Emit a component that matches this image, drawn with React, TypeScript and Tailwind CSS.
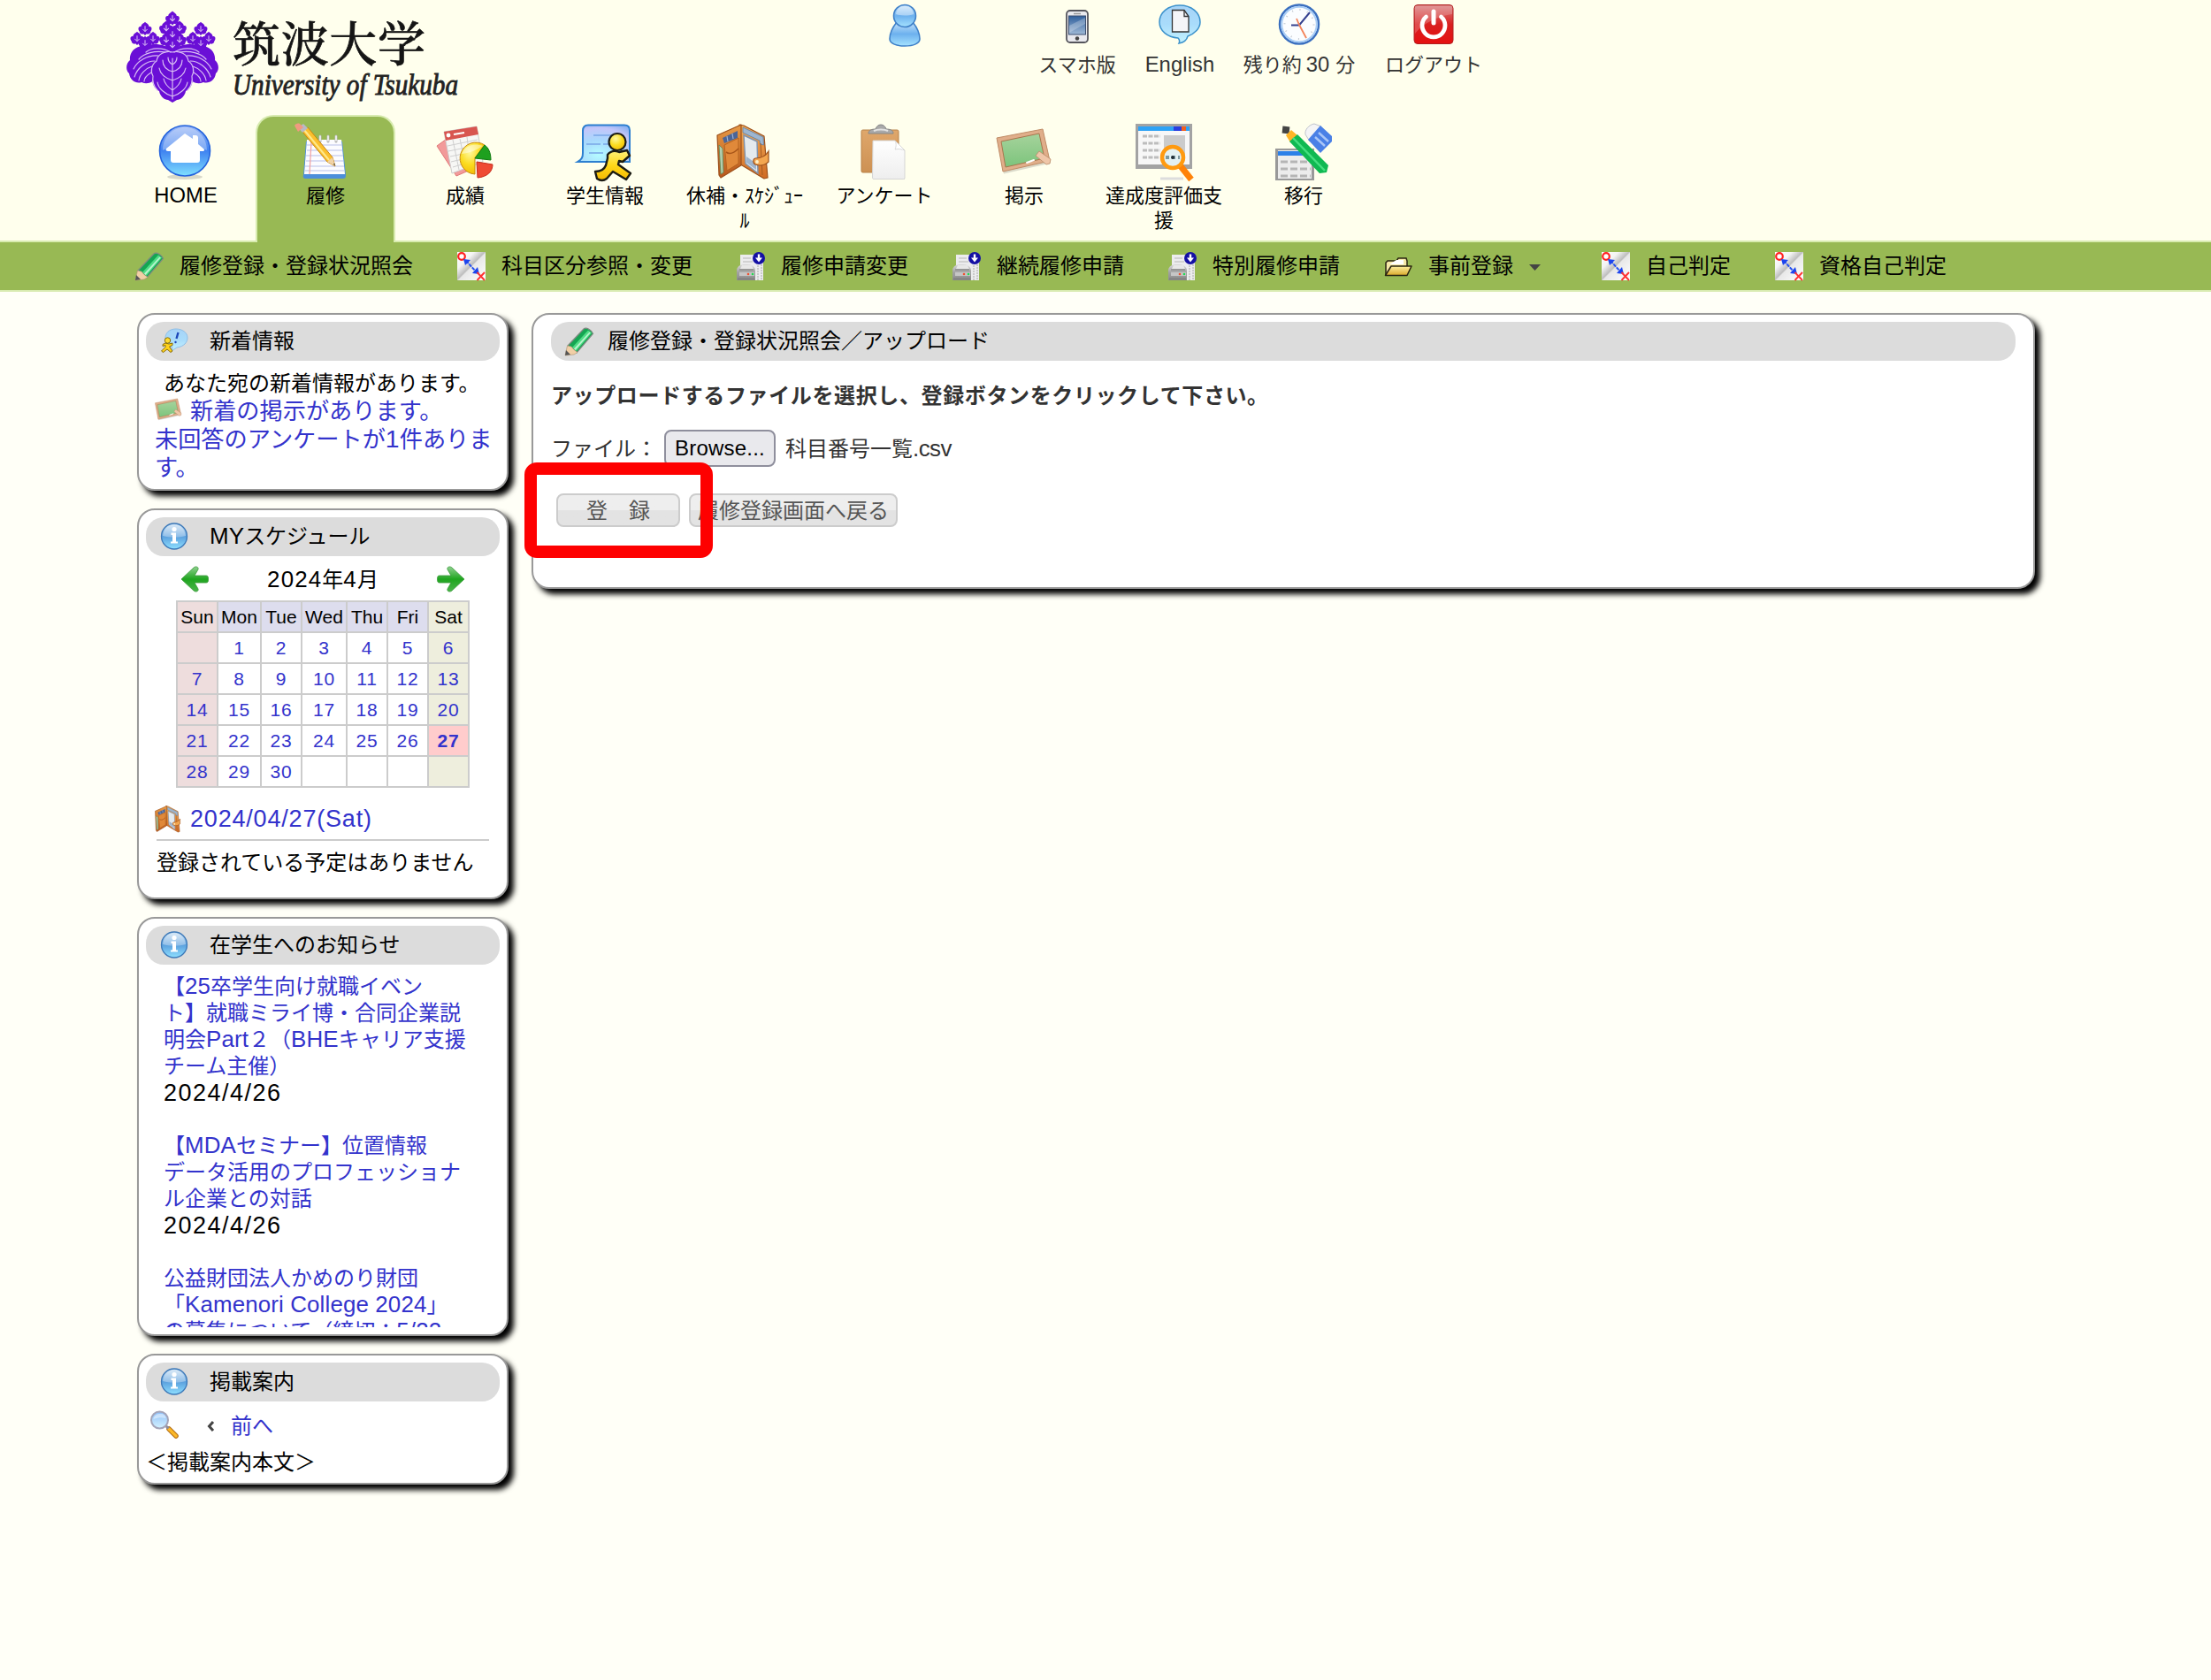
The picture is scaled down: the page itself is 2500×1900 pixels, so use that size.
import React from "react";

const LATIN = /([!-~][ -~]*)/;

/* Mixed Japanese / Latin text: Latin runs are set a little larger to balance the kana. */
function T({ children, ls = "tracking-[0.005em]" }: { children: string; ls?: string }) {
  return (
    <>
      {children.split(LATIN).map((part, i) =>
        i % 2 ? (
          <span key={i} className={`font-['Liberation_Sans',Arial,sans-serif] text-[1.08em] leading-none ${ls}`}>
            {part}
          </span>
        ) : (
          part
        )
      )}
    </>
  );
}

function Defs() {
  const lin = (id: string, a: string, b: string, c?: string) => (
    <linearGradient id={id} x1="0" y1="0" x2="0" y2="1">
      <stop offset="0" stopColor={a} />
      {c ? <stop offset="0.5" stopColor={b} /> : null}
      <stop offset="1" stopColor={c || b} />
    </linearGradient>
  );
  return (
    <svg className="absolute h-0 w-0" aria-hidden>
      <defs>
        {lin("gHome", "#9db9f6", "#3f82f0", "#7fe0ff")}
        {lin("gInfo", "#cfe3f5", "#5a9fdd", "#8fe0ff")}
        {lin("gPerson", "#c4e2fb", "#6db1ee", "#a5e2ff")}
        {lin("gBubble", "#a6d3f7", "#a9dcfb", "#c5f3ff")}
        {lin("gScreen", "#2f5f9c", "#9fb9d6")}
        {lin("gPower", "#d98080", "#d92020", "#e51010")}
        {lin("gYellow", "#fff27a", "#ffd81a", "#f4b800")}
        {lin("gOrange", "#f2ae58", "#cf6a24")}
        {lin("gOrangeDark", "#e79a45", "#b9561c")}
        {lin("gBoard", "#a6d39c", "#7cc47c")}
        {lin("gPaper", "#ffffff", "#eeeeee")}
        {lin("gArrow", "#8fd08f", "#1fa51f", "#4cb44c")}
        {lin("gClip", "#dfa76b", "#cd9153")}
        {lin("gLens", "#8fbff8", "#d4f2ff")}
        {lin("gFolder", "#fff0a0", "#d9a92a")}
        {lin("gPrinter", "#d9d9d9", "#a2a2a2", "#8c8c8c")}
        <radialGradient id="gChat" cx="0.4" cy="0.8" r="0.9">
          <stop offset="0" stopColor="#b4fcff" />
          <stop offset="0.45" stopColor="#a8d8fd" />
          <stop offset="0.8" stopColor="#c3c6fa" />
          <stop offset="1" stopColor="#8fb4f2" />
        </radialGradient>
        <linearGradient id="gCompare" x1="0" y1="0" x2="1" y2="1">
          <stop offset="0" stopColor="#ffffff" />
          <stop offset="0.3" stopColor="#f4f4f4" />
          <stop offset="0.49" stopColor="#bdbdbd" />
          <stop offset="0.52" stopColor="#e8e8e8" />
          <stop offset="1" stopColor="#ffffff" />
        </linearGradient>
        <radialGradient id="gBall" cx="0.4" cy="0.3" r="0.8">
          <stop offset="0" stopColor="#fff9a0" />
          <stop offset="0.5" stopColor="#fbdc20" />
          <stop offset="1" stopColor="#f0b400" />
        </radialGradient>
      </defs>
    </svg>
  );
}

const Svg = ({ s, v = 64, children }: { s: number; v?: number; children: React.ReactNode }) => (
  <svg width={s} height={s} viewBox={`0 0 ${v} ${v}`} fill="none" className="shrink-0 overflow-visible">
    {children}
  </svg>
);

function Emblem() {
  const bloom = (x: number, y: number, k = 1) => (
    <g key={`${x}-${y}`} transform={`translate(${x} ${y}) scale(${k})`}>
      <path
        d="M0-8C2-6 5-5 5-2 9-3 9 2 7 4 7 7 4 8 2 7L0 9-2 7C-4 8-7 7-7 4-9 2-9-3-5-2-5-5-2-6 0-8Z"
        fill="#6a0fd6"
      />
      <path d="M0-3V4M-3 1 0 4 3 1" stroke="#e0c8f6" strokeWidth="1.1" />
    </g>
  );
  return (
    <svg width="104" height="104" viewBox="0 0 104 104" fill="none" className="shrink-0">
      <g fill="#6a0fd6">
        {[[52, 8], [45, 19], [60, 19], [45, 32], [60, 32], [52, 26], [52, 38]].map(([x, y]) => bloom(x, y, 0.95))}
        {[[21, 20], [12, 31], [30, 31], [21, 36]].map(([x, y]) => bloom(x, y, 0.9))}
        {[[84, 20], [93, 31], [75, 31], [84, 36]].map(([x, y]) => bloom(x, y, 0.9))}
        <path d="M52 45C46 38 30 36 20 40 8 40 3 49 4 56-1 60-1 68 3 71 4 79 11 83 17 81 24 84 30 81 33 76Z" />
        <path d="M52 45C58 38 74 36 84 40 96 40 101 49 100 56 105 60 105 68 101 71 100 79 93 83 87 81 80 84 74 81 71 76Z" />
        <path d="M52 46C44 44 35 49 34 57 28 61 27 69 30 74 28 81 31 88 37 91 38 97 43 101 47 101L52 104 57 101C61 101 66 97 67 91 73 88 76 81 74 74 77 69 76 61 70 57 69 49 60 44 52 46Z" />
      </g>
      <g stroke="#d9bdf3" strokeWidth="1.2" strokeLinecap="round">
        <path d="M52 47C44 45 35 49 34 57 28 61 27 69 30 74 29 80 31 86 35 90M52 47C60 45 69 49 70 57 76 61 77 69 74 74 75 80 73 86 69 90" />
        <path d="M52 54V100M52 90C46 86 43 82 42 77M52 90C58 86 61 82 62 77M52 79C43 76 38 71 37 65M52 79C61 76 66 71 67 65M52 69C45 67 41 62 41 56M52 69C59 67 63 62 63 56M52 97C43 94 36 88 35 81M52 97C61 94 68 88 69 81M52 61C48 59 47 56 47 53M52 61C56 59 57 56 57 53" />
        <path d="M50 47C40 41 28 42 22 47M44 47C32 45 20 48 14 55M36 51C24 50 12 57 8 66M32 57C22 57 12 65 9 75M29 63C22 65 15 72 14 79M28 70C23 73 20 77 20 80" />
        <path d="M54 47C64 41 76 42 82 47M60 47C72 45 84 48 90 55M68 51C80 50 92 57 96 66M72 57C82 57 92 65 95 75M75 63C82 65 89 72 90 79M76 70C81 73 84 77 84 80" />
      </g>
    </svg>
  );
}

const HomeIcon = () => (
  <Svg s={64}>
    <ellipse cx="31" cy="60" rx="20" ry="3" fill="#000" opacity=".15" />
    <circle cx="31" cy="30.500" r="28.500" fill="url(#gHome)" stroke="#2463dd" strokeWidth="1.600" />
    <path d="M6 30C6 14 18 4 31 4s25 10 25 26C43 24 19 24 6 30Z" fill="#fff" opacity=".3" />
    <path
      d="M31 11 10 28c-1 2 0 3 2 3h3v10c0 2 1 3 3 3h27c2 0 3-1 3-3V31h3c2 0 3-1 1-3l-6-5v-7c0-2-1-3-3-3h-3v4Z"
      fill="#fff"
    />
  </Svg>
);

const NotepadIcon = () => (
  <Svg s={64}>
    <g transform="translate(-1 0)">
      <path d="M11 20h41l4 38c0 3-1 4-3 4H11c-3 0-4-2-3-4Z" fill="#4c8edb" />
      <path d="M12 18h39l4 39H9Z" fill="#fcfcff" />
      <path d="M12 24h40M12 30h40M11 36h42M11 42h42M10 48h44M10 53h44" stroke="#b7bfe8" strokeWidth="1" />
      <path d="M17 20 15 57" stroke="#f2a0a0" strokeWidth="1.200" />
      <path d="M18 20v-6M27 20v-6M36 20v-6M45 20v-6" stroke="#b5b5b5" strokeWidth="3" strokeLinecap="round" />
      <path d="M18 19v-5M27 19v-5M36 19v-5M45 19v-5" stroke="#fff" strokeWidth="1.400" strokeLinecap="round" />
      <path d="M7 9 35 43l9 5-3-10L13 4Z" fill="#fbc02d" stroke="#c98512" strokeWidth="1" />
      <path d="M9 7 37 41" stroke="#ffe88a" strokeWidth="2" />
      <path d="m35 43 9 5-3-10Z" fill="#f0d3a8" />
      <path d="m42 45.500 2 2.500-.800-3.500Z" fill="#333" />
      <path d="m2 4 5 6 6-5-5-5Z" fill="#b9b9c4" />
      <path d="M-2 2c1-2 4-3 6-2l4 4-6 5Z" fill="#f19a80" />
    </g>
  </Svg>
);

const ChartIcon = () => (
  <Svg s={64}>
    <path d="m0 25 18-13 20 40-16 7Z" fill="#f29a9a" stroke="#e07878" />
    <path d="m8 9 37-6 7 40-35 13Z" fill="#f7f7f5" stroke="#ccc" />
    <path d="m8 9 37-6 2 9-37 7Z" fill="#d85550" />
    <path d="m12 25 34-7M13 31l34-7M15 37l34-7M16 43l30-7M18 49l20-6M18 18l7 34M26 17l7 33M34 15l4 30" stroke="#cfcfcf" strokeWidth="1" />
    <circle cx="13" cy="13" r="2.400" fill="#fff" />
    <path d="m19 12 12-2" stroke="#fff" strokeWidth="2" />
    <path d="M43 38.500 43 57a18 18 0 1 1 11-33Z" fill="url(#gBall)" stroke="#c98a10" />
    <path d="M43 39 54 24c4 3 7 8 7 17Z" fill="#1ea01e" stroke="#0f7a10" />
    <path d="m45 43 18 3c0 8-6 14-17 15Z" fill="#ef4a34" stroke="#c62a1a" />
    <path d="M28 34c3-9 14-13 24-9-6 4-14 8-24 9Z" fill="#fff" opacity=".45" />
  </Svg>
);

const StudentIcon = () => (
  <Svg s={64}>
    <path
      d="M13 1.500h41c4 0 6 2 6 6V43H1c5-3 6-5 6-10V8c0-4 2-6.500 6-6.500Z"
      fill="url(#gChat)"
      stroke="#2d7fd0"
      strokeWidth="2"
    />
    <path d="M19 13h24M11 23h16M30 23h7M14 33h16" stroke="#7aa6e6" strokeWidth="1.300" />
    <path
      d="M35 35c3-4 8-5 13-3l9-2 3 6-8 7-4-1-1 4 14 10-5 7-15-9-7 8c-4 3-8 2-11 0l-2-8c6 0 10-2 12-7l2-8Z"
      fill="url(#gYellow)"
      stroke="#1c1c14"
      strokeWidth="2.400"
      strokeLinejoin="round"
    />
    <circle cx="46" cy="20.500" r="9.500" fill="url(#gBall)" stroke="#1c1c14" strokeWidth="2.200" />
  </Svg>
);

const WalletIcon = ({ s = 64 }: { s?: number }) => (
  <Svg s={s}>
    <path d="m26 1 5 1 23 12 4 47-4 1-25-15-3-2Z" fill="url(#gOrange)" stroke="#9c4f1a" strokeWidth="1.200" strokeLinejoin="round" />
    <path d="M1 13 28 1v46L5 61 3 58Z" fill="url(#gOrangeDark)" stroke="#9c4f1a" strokeWidth="1.200" strokeLinejoin="round" />
    <path d="m7 16 17-8v8L9 22Z" fill="#4c6596" />
    <path d="m12 14 1 6M18 11l1 6" stroke="#9db4d8" strokeWidth="1.200" />
    <path d="M9 24 25 16v29L12 53Z" fill="#e0893a" stroke="#b4621f" strokeWidth="1" />
    <path d="M11 32c4 3 9 1 14-4" stroke="#a8561a" strokeWidth="1.600" />
    <path d="m3 24 4 4 1 27-3 2Z" fill="#b2cdae" stroke="#5c8a58" strokeWidth=".8" />
    <path d="m30 4 23 11 .500 9-4-1-.500-4-19-9Z" fill="#9db6d0" stroke="#5f7ea3" strokeWidth=".8" />
    <path d="m31 13 15 7 1 36-14-11Z" fill="#e4eaee" stroke="#7f93ad" strokeWidth="1.400" />
    <path d="m34 37 11 8v7l-11-8Z" fill="#9fb4cc" />
    <path d="M50 22l2 36" stroke="#a35a22" strokeWidth="1" />
    <path d="M59 31v12c-4 4-10 5-15 3-3-2-3-6 0-7 5 0 11-1 15-8Z" fill="#f3a650" stroke="#9c4f1a" strokeWidth="1.200" />
    <circle cx="46" cy="43" r="1.900" fill="#fdf0c8" />
  </Svg>
);

const ClipboardIcon = () => (
  <Svg s={64}>
    <rect x="6" y="7" width="42" height="48" rx="1.500" fill="url(#gClip)" stroke="#b8824a" />
    <path d="M14 11c0-4 4-5 8-5 1-3 3-5 6-5s5 2 6 5c4 0 8 1 8 5Z" fill="#a9a9a9" stroke="#868686" />
    <path d="M20 8c4-2 12-2 16 0" stroke="#e2e2e2" strokeWidth="2" />
    <path d="M19 20h25l11 11v32H19Z" fill="#000" opacity=".15" />
    <path d="M19 19h25l11 11v31c0 1-.5 1.500-1.500 1.500H20c-1 0-1.500-.5-1.500-1.500Z" fill="url(#gPaper)" stroke="#d5d5d5" />
    <path d="M44 19c2 4 1 8 0 10 4-1 8 0 11 1Z" fill="#fff" stroke="#d0d0d0" strokeWidth=".8" />
  </Svg>
);

const BoardIcon = ({ s = 64 }: { s?: number }) => (
  <Svg s={s}>
    <path d="M1 17 53 6l9 37-53 12Z" fill="#000" opacity=".14" transform="translate(0 1.500)" />
    <path d="M1 16 53 6l8 36-53 12Z" fill="#e0ae8a" stroke="#c08c66" strokeLinejoin="round" />
    <path d="M6 20 49 11l6 28-44 10Z" fill="url(#gBoard)" stroke="#a8764e" strokeWidth="1" />
    <path d="m35 44 8-3" stroke="#fff" strokeWidth="2" strokeLinecap="round" />
    <path d="m49 31 13 9-1 5-4 1-12-10Z" fill="#efc6a8" stroke="#b98a68" strokeWidth=".8" />
  </Svg>
);

const WindowSearchIcon = () => (
  <Svg s={64}>
    <rect width="64" height="51" fill="#a3a3a3" />
    <rect x="3" y="3" width="58" height="43" fill="#f7f7f7" />
    <rect x="3" y="3" width="58" height="5" fill="#2ea2f5" />
    <rect x="43" y="3" width="9" height="5" fill="#2a3ee0" />
    <rect x="52" y="3" width="5" height="5" fill="#f06020" />
    <path d="M8 14h20M8 22h20M8 30h20M8 38h18" stroke="#bdbdbd" strokeWidth="3" strokeDasharray="5 1.500" />
    <rect x="32" y="13" width="24" height="25" fill="#cbcbcb" />
    <path d="M28 62h26" stroke="#ddd" strokeWidth="3" />
    <path d="m51 48 12 15" stroke="#ff8208" strokeWidth="7" />
    <circle cx="42" cy="38" r="12" fill="#e3f1f3" stroke="#ff9a10" strokeWidth="4.500" />
    <path d="M34 38h16" stroke="#7d98a0" strokeWidth="4" strokeDasharray="4 3" />
    <circle cx="42" cy="38" r="2" fill="#1d2c36" />
  </Svg>
);

const TransferIcon = () => (
  <Svg s={64}>
    <rect y="28" width="44" height="36" fill="#999" />
    <rect x="3" y="30" width="38" height="32" fill="#ececec" />
    <rect x="3" y="31" width="38" height="5" fill="#2c80e8" />
    <path d="M6 43h34M6 51h34M6 59h34" stroke="#b5b5b5" strokeWidth="3" strokeDasharray="8 3" />
    <path d="M34 12c-1-5 4-11 10-12l8 3-13 17Z" fill="#f4f4f6" stroke="#bfc3cc" />
    <path d="M51 2 64 14v6L51 33 37 18Z" fill="#4a80e6" />
    <path d="m45 15 11 10M49 10l11 10" stroke="#a9c5f7" strokeWidth="2.400" />
    <rect x="8" y="3" width="8" height="8" fill="#444" transform="rotate(6 12 7)" />
    <path d="m12 13 6-6 7 6-8 8Z" fill="#ffb526" />
    <path d="m16 20 9-8 35 35-2 8-8 1Z" fill="#10b952" />
    <path d="m20 16 36 37" stroke="#45df80" strokeWidth="2.500" />
  </Svg>
);

const PersonIcon = () => (
  <Svg s={48} v={48}>
    <path d="M15 24c-4 5-8 12-8 19 0 5 7 8 17 8s17-3 17-8c0-7-4-14-8-19Z" transform="translate(0 -3)" fill="url(#gPerson)" stroke="#3f80c8" strokeWidth="1.600" />
    <ellipse cx="24" cy="14" rx="12.500" ry="12.500" fill="url(#gPerson)" stroke="#3f80c8" strokeWidth="1.600" />
    <path d="M14 12c1-7 5-9 10-9s9 2 10 9c-6 2-14 2-20 0Z" fill="#fff" opacity=".4" />
  </Svg>
);

const PhoneIcon = () => (
  <Svg s={48} v={48}>
    <rect x="12" y="8" width="24" height="36" rx="4" fill="#e9e9ee" stroke="#55555c" strokeWidth="1.800" />
    <path d="M20 11.500h8" stroke="#999" strokeWidth="1.500" />
    <rect x="14.500" y="14" width="19" height="21" fill="url(#gScreen)" stroke="#3b4f70" />
    <path d="M15 25 33 16v7L15 33Z" fill="#fff" opacity=".25" />
    <circle cx="24" cy="39.500" r="2.200" fill="#444" />
  </Svg>
);

const BubbleIcon = () => (
  <Svg s={48} v={48}>
    <path d="M24 2C11 2 1 10 1 21c0 10 9 17 21 18 2 2 2 4 1 6 6-1 9-4 10-8 8-3 14-9 14-16C47 10 37 2 24 2Z" fill="url(#gBubble)" stroke="#3c92cc" strokeWidth="1.500" />
    <path d="M15.500 7.500H29l5 7V32H15.500Z" fill="#f5f5f8" stroke="#333" strokeWidth="1.300" />
    <path d="M29 7.500v7h5" stroke="#333" strokeWidth="1.300" />
  </Svg>
);

const ClockIcon = () => (
  <Svg s={48} v={48}>
    <circle cx="24" cy="23.500" r="22" fill="#fbfdff" stroke="#3a6fbf" strokeWidth="2.500" />
    <circle cx="24" cy="23.500" r="19.800" stroke="#a8cdf5" strokeWidth="2" />
    <circle cx="24" cy="23.500" r="16.500" stroke="#c0c6cf" strokeWidth="2" strokeDasharray="1 7.640" />
    <path d="M15 24.500h9L36 10" stroke="#35418f" strokeWidth="2" />
    <path d="m21 17 3 7 8 15" stroke="#f4845a" strokeWidth="1.800" />
  </Svg>
);

const PowerIcon = () => (
  <Svg s={48} v={48}>
    <rect x="2" y="1.500" width="44" height="44" rx="4" fill="url(#gPower)" stroke="#b02020" />
    <path d="M3 3h42v9C30 14 12 22 3 34Z" fill="#fff" opacity=".2" />
    <path d="M15.500 15a13 13 0 1 0 17 0" stroke="#fff" strokeWidth="4.800" strokeLinecap="round" />
    <path d="M24 9v13" stroke="#fff" strokeWidth="5" strokeLinecap="round" />
  </Svg>
);

const PencilIcon = () => (
  <Svg s={32} v={32}>
    <path d="M3 21 21 2c3-2.500 9 1.500 10.500 5.500L13 29Z" fill="#14a652" stroke="#808a82" strokeWidth="1.200" />
    <path d="m8 23 18-19.500 4 3L12.500 27Z" fill="#4fdc85" />
    <path d="m10 24.500 17.500-19 1.200.9L11.500 26Z" fill="#b9f5cf" />
    <path d="M0 32 2.500 21 7 22l3 3.500 4 3L10 31Z" fill="#f1cfa6" stroke="#a99070" strokeWidth=".6" />
    <path d="m0 32 1-6 5 5Z" fill="#555" />
  </Svg>
);

const CompareIcon = () => (
  <Svg s={32} v={32}>
    <rect width="32" height="32" fill="url(#gCompare)" />
    <circle cx="5" cy="5" r="3.800" stroke="#f22" strokeWidth="2.200" fill="#fff" />
    <path d="m10 10 12 13" stroke="#2450f0" strokeWidth="2" strokeDasharray="4 1" />
    <path d="m7 8 8 1-6 6ZM25 25l-8-1 6-7Z" fill="#1c44ee" />
    <path d="m22.500 23 8.500 9M31 23l-8.500 9" stroke="#f33" strokeWidth="1.900" />
  </Svg>
);

const PrinterIcon = () => (
  <Svg s={32} v={32}>
    <path d="M4 3h19l7 6v23H19L4 18Z" fill="#ececee" />
    <path d="M24 15v17M28 14v18" stroke="#c2c2c2" strokeWidth="1.600" strokeDasharray="2 1" />
    <path d="M7 7h9M7 11h11" stroke="#c9c9c9" strokeWidth="1.500" />
    <path d="M0 20c1-4 4-6 10-6s9 1 11 6v12H0Z" fill="url(#gPrinter)" />
    <path d="M6 15h11l2 4H4Z" fill="#e8e8e8" />
    <path d="M3 20h16" stroke="#777" strokeWidth="1" />
    <path d="M3 23h17v4H3Z" fill="#c6c6c6" />
    <circle cx="13" cy="25" r="1.300" fill="#f05030" />
    <circle cx="18" cy="25" r="1.300" fill="#20d850" />
    <path d="M1 29h19v3H1Z" fill="#858585" />
    <circle cx="25" cy="7" r="7" fill="#1410a4" />
    <path d="M25 2.500v5" stroke="#fff" strokeWidth="2.400" />
    <path d="M21 6.500h8l-4 5Z" fill="#fff" />
  </Svg>
);

const FolderIcon = () => (
  <Svg s={32} v={32}>
    <path d="M2 26V12l2-2h10l2-3h9l1 3v6" fill="#f5e8a8" stroke="#2a2410" strokeWidth="1.500" />
    <path d="M6 14h16V9h-8" fill="#fff" />
    <path d="M1.500 26.500 8 16h23l-5 10.500Z" fill="url(#gFolder)" stroke="#2a2410" strokeWidth="1.500" strokeLinejoin="round" />
  </Svg>
);

const InfoIcon = () => (
  <Svg s={32} v={32}>
    <circle cx="16" cy="15.500" r="14.500" fill="url(#gInfo)" stroke="#3c78b8" strokeWidth="1.300" />
    <path d="M3 15C4 7 9 2.500 16 2.500S28 7 29 15c-8 2-18 2-26 0Z" fill="#fff" opacity=".35" />
    <circle cx="16" cy="7.500" r="2.600" fill="#fff" />
    <path d="M12.500 11.500H18v10h2v2h-8v-2h2V14h-1.500Z" fill="#fff" />
  </Svg>
);

const NewsIcon = () => (
  <Svg s={32} v={32}>
    <path d="M18 2C10 2 6 7 6 12c0 7 5 10 8 11l-1 4 6-4c8-1 12-6 12-11 0-6-6-10-13-10Z" fill="url(#gBubble)" stroke="#8fbfe8" />
    <path d="m20.500 6-2 7" stroke="#1b46b8" strokeWidth="2.400" />
    <circle cx="17.500" cy="17" r="1.200" fill="#1b46b8" />
    <g strokeLinejoin="round" stroke="#7a6000" strokeWidth=".9">
      <path d="m6 18 4 1 4-1v2.500L10.500 22l3.500 5-2 1.500L8 25l-4.500 3.500L1.500 27 6 22.500v-2l-3 1v-2Z" fill="#ffd21a" />
      <circle cx="8.500" cy="15" r="3.200" fill="#ffdc30" />
    </g>
  </Svg>
);

const GreenArrow = ({ flip = false }: { flip?: boolean }) => (
  <svg width="32" height="30" viewBox="0 0 32 30" fill="none" className={flip ? "-scale-x-100" : ""}>
    <path
      d="M1 15 15 2c2-2 6-1 5 2l-4 7h13c2 0 2.500 1 2.500 4s-.5 4-2.500 4H16l4 7c1 3-3 4-5 2Z"
      fill="url(#gArrow)"
      stroke="#3a9a3a"
      strokeWidth=".8"
    />
  </svg>
);

const SearchIcon = () => (
  <Svg s={32} v={32}>
    <path d="m21 21 8 8" stroke="#b06a10" strokeWidth="5.500" strokeLinecap="round" />
    <path d="m21 21 8 8" stroke="#fbb829" strokeWidth="3.500" strokeLinecap="round" />
    <path d="m17.500 17.500 3 3" stroke="#8c8c9a" strokeWidth="3" />
    <circle cx="10.500" cy="11" r="9.500" fill="url(#gLens)" stroke="#a4a4b8" strokeWidth="2" />
    <path d="M3.500 10c1-5 4-6 8-6s6 2 6 5c-4-1-9-1-14 1Z" fill="#fff" opacity=".45" />
  </Svg>
);

const tabs = [
  { label: "HOME", Icon: HomeIcon },
  { label: "履修", Icon: NotepadIcon, active: true },
  { label: "成績", Icon: ChartIcon },
  { label: "学生情報", Icon: StudentIcon },
  { label: "休補・ｽｹｼﾞｭｰﾙ", Icon: WalletIcon },
  { label: "アンケート", Icon: ClipboardIcon },
  { label: "掲示", Icon: BoardIcon },
  { label: "達成度評価支援", Icon: WindowSearchIcon },
  { label: "移行", Icon: TransferIcon },
];

const nav = [
  { label: "履修登録・登録状況照会", Icon: PencilIcon },
  { label: "科目区分参照・変更", Icon: CompareIcon },
  { label: "履修申請変更", Icon: PrinterIcon },
  { label: "継続履修申請", Icon: PrinterIcon },
  { label: "特別履修申請", Icon: PrinterIcon },
  { label: "事前登録", Icon: FolderIcon, menu: true },
  { label: "自己判定", Icon: CompareIcon },
  { label: "資格自己判定", Icon: CompareIcon },
];

const weeks = [
  ["", "1", "2", "3", "4", "5", "6"],
  ["7", "8", "9", "10", "11", "12", "13"],
  ["14", "15", "16", "17", "18", "19", "20"],
  ["21", "22", "23", "24", "25", "26", "27"],
  ["28", "29", "30", "", "", "", ""],
];

function Card({ className, children }: { className: string; children: React.ReactNode }) {
  return (
    <section
      className={`relative rounded-[20px] border-2 border-[#999] bg-white pt-2 shadow-[6px_6px_6px_#000] ${className}`}
    >
      {children}
    </section>
  );
}

function CardTitle({ icon, gap = "gap-6", children }: { icon: React.ReactNode; gap?: string; children: string }) {
  return (
    <h2 className={`flex h-11 items-center rounded-[20px] bg-[#dcdcdc] pl-4 text-[24px] leading-[40px] ${gap}`}>
      {icon}
      <span className="-mt-1 whitespace-nowrap">
        <T>{children}</T>
      </span>
    </h2>
  );
}

function Action({ className, icon, children }: { className: string; icon: React.ReactNode; children?: string }) {
  return (
    <div className={`flex flex-col items-center gap-1.5 ${className}`}>
      {icon}
      {children && (
        <span className="-mt-px text-[22px] leading-7 whitespace-nowrap">
          <T>{children}</T>
        </span>
      )}
    </div>
  );
}

function Calendar() {
  const days = ["Sun", "Mon", "Tue", "Wed", "Thu", "Fri", "Sat"];
  return (
    <table className="ml-[34px] mt-[7px] w-[332px] table-fixed border-collapse text-center font-['Liberation_Sans',Arial,sans-serif] text-[21px] leading-none">
      <colgroup>
        <col className="w-[46px]" />
        <col className="w-[49px]" />
        <col className="w-[46px]" />
        <col className="w-[51px]" />
        <col className="w-[46px]" />
        <col className="w-[46px]" />
        <col className="w-[46px]" />
      </colgroup>
      <thead>
        <tr className="h-[35px]">
          {days.map((d, i) => (
            <th
              key={d}
              className={`border-2 border-[#ccc] p-0 font-normal ${
                i === 0 ? "bg-[#eedddd]" : i === 6 ? "bg-[#eeeedd]" : "bg-[#ddddee]"
              }`}
            >
              {d}
            </th>
          ))}
        </tr>
      </thead>
      <tbody className="tracking-[0.8px] text-[#3333cc]">
        {weeks.map((w, r) => (
          <tr key={r} className="h-[35px]">
            {w.map((d, i) => (
              <td
                key={i}
                className={`border-2 border-[#ccc] p-0 ${
                  d === "27" ? "bg-[#ffcccc] font-bold" : i === 0 ? "bg-[#eedddd]" : i === 6 ? "bg-[#eeeedd]" : ""
                }`}
              >
                {d}
              </td>
            ))}
          </tr>
        ))}
      </tbody>
    </table>
  );
}

function Notice({ lines, date }: { lines: string[]; date?: string }) {
  return (
    <div className="mb-[30px]">
      <a className="block text-[#3333cc]">
        {lines.map((l) => (
          <span key={l} className="block h-[30px] whitespace-pre">
            <T>{l}</T>
          </span>
        ))}
      </a>
      {date && (
        <div className="h-[30px] pt-0.5 font-['Liberation_Sans',Arial,sans-serif] text-[27px] tracking-[0.055em]">
          {date}
        </div>
      )}
    </div>
  );
}

export default function App() {
  return (
    <div className="flex h-[1900px] w-[2500px] flex-col overflow-hidden bg-[#fffff7] font-['Noto_Sans_CJK_JP',sans-serif] text-black">
      <Defs />
      <header className="h-[272px] bg-[#ffffed]">
        <div className="flex h-[130px] items-start pl-[143px] text-[#333]">
          <div className="flex w-[374px] gap-[17px] pt-3">
            <Emblem />
            <svg width="254" height="110" viewBox="0 0 254 110" className="overflow-visible">
              <text
                x="-1"
                y="58"
                textLength="218"
                fontSize="54"
                fontWeight="500"
                fill="#151515"
                stroke="#151515"
                strokeWidth="0.700"
                className="font-['Noto_Serif_CJK_JP','Noto_Sans_CJK_JP',serif]"
              >
                筑波大学
              </text>
              <text
                x="-1"
                y="95"
                textLength="255"
                lengthAdjust="spacingAndGlyphs"
                fontSize="33"
                fontStyle="italic"
                fill="#222"
                stroke="#222"
                strokeWidth="0.900"
                className="font-['Liberation_Serif',serif]"
              >
                University of Tsukuba
              </text>
            </svg>
          </div>
          <div className="ml-[482px] flex pt-1">
            <Action className="w-12" icon={<PersonIcon />} />
            <Action className="ml-[127px] w-[88px]" icon={<PhoneIcon />}>スマホ版</Action>
            <Action className="ml-[33px] w-[78px]" icon={<BubbleIcon />}>English</Action>
            <Action className="ml-[33px] w-[126px]" icon={<ClockIcon />}>残り約 30 分</Action>
            <Action className="ml-[34px] w-[110px]" icon={<PowerIcon />}>ログアウト</Action>
          </div>
        </div>
        <nav className="flex pl-[131px]">
          {tabs.map(({ label, Icon, active }) => (
            <a
              key={label}
              className={`flex w-[158px] flex-col items-center gap-0.5 border-2 border-b-0 px-[7px] pt-2 text-center text-[22px] leading-7 ${
                active ? "relative z-10 h-36 rounded-t-[20px] border-[#d8ebb0] bg-[#98b954]" : "h-[142px] border-transparent"
              }`}
            >
              <Icon />
              <span className="-mt-px">
                <T>{label}</T>
              </span>
            </a>
          ))}
        </nav>
      </header>

      <nav className="flex h-[58px] shrink-0 items-center gap-[50px] border-y-2 border-[#d8ebb0] bg-[#98b954] pl-[153px] text-[24px] leading-8">
        {nav.map(({ label, Icon, menu }) => (
          <a key={label} className="flex items-center gap-[18px] whitespace-nowrap">
            <Icon />
            <span className="-mt-[5px] flex items-center">
              {label}
              {menu && (
                <svg width="50" height="10" viewBox="0 0 50 10" className="mt-2">
                  <path d="M18 1h13l-6.500 7Z" fill="#444" />
                </svg>
              )}
            </span>
          </a>
        ))}
      </nav>

      <div className="flex items-start gap-[26px] pl-[155px] pt-6">
        <aside className="flex w-[420px] shrink-0 flex-col gap-5 text-[24px]">
          <Card className="h-[201px] px-2">
            <CardTitle icon={<NewsIcon />}>新着情報</CardTitle>
            <p className="mt-2 pl-5 leading-[32px] whitespace-nowrap">あなた宛の新着情報があります。</p>
            <div className="pl-2.5 text-[26.200px] leading-[32.500px] text-[#3333cc]">
              <a className="-mt-px flex items-center gap-[9px] whitespace-nowrap">
                <BoardIcon s={31} />
                新着の掲示があります。
              </a>
              <a className="-mt-px block whitespace-nowrap">
                <T>未回答のアンケートが1件ありま</T>
                <br />
                す。
              </a>
            </div>
          </Card>

          <Card className="h-[442px] px-2">
            <CardTitle icon={<InfoIcon />}>MYスケジュール</CardTitle>
            <div className="mt-[9px] flex h-[34px] items-center justify-between px-[39px] leading-8">
              <GreenArrow />
              <span className="-mt-0.5">
                <T ls="tracking-[0.045em]">2024年4月</T>
              </span>
              <GreenArrow flip />
            </div>
            <Calendar />
            <div className="mt-[20px] flex items-center gap-[9px] pl-2.5 text-[25px] leading-[34px] text-[#3333cc]">
              <WalletIcon s={31} />
              <T ls="tracking-[0.03em]">2024/04/27(Sat)</T>
            </div>
            <hr className="ml-3 mt-[7px] w-[376px] border-t-2 border-[#ccc]" />
            <p className="ml-3 mt-[7px] leading-[32px] whitespace-nowrap">登録されている予定はありません</p>
          </Card>

          <Card className="h-[474px] px-2">
            <CardTitle icon={<InfoIcon />}>在学生へのお知らせ</CardTitle>
            <div className="mt-2 h-[402px] overflow-hidden pl-5 leading-[30px]">
              <Notice
                date="2024/4/26"
                lines={["【25卒学生向け就職イベン", "ト】就職ミライ博・合同企業説", "明会Part２（BHEキャリア支援", "チーム主催）"]}
              />
              <Notice date="2024/4/26" lines={["【MDAセミナー】位置情報", "データ活用のプロフェッショナ", "ル企業との対話"]} />
              <Notice lines={["公益財団法人かめのり財団", "「Kamenori College 2024」", "の募集について（締切：5/22"]} />
            </div>
          </Card>

          <Card className="h-[148px] px-2">
            <CardTitle icon={<InfoIcon />}>掲載案内</CardTitle>
            <div className="mt-2 flex h-9 items-center pl-[5px] leading-[34px]">
              <SearchIcon />
              <svg width="10" height="14" viewBox="0 0 10 14" fill="none" className="ml-[31px] mt-1">
                <path d="M8 2 3.500 7 8 12" stroke="#444" strokeWidth="3" />
              </svg>
              <a className="ml-[18px] text-[#3333cc]">前へ</a>
            </div>
            <p className="mt-[7px] leading-[32px] whitespace-nowrap">＜掲載案内本文＞</p>
          </Card>
        </aside>

        <Card className="h-[312px] w-[1700px] px-5 text-[24px]">
          <CardTitle icon={<PencilIcon />} gap="gap-4">
            履修登録・登録状況照会／アップロード
          </CardTitle>
          <div className="text-[#333]">
            <p className="mt-[22px] font-bold leading-[32px] tracking-[0.620px]">
              アップロードするファイルを選択し、登録ボタンをクリックして下さい。
            </p>
            <div className="mt-6 flex h-[42px] items-center">
              <span className="-mt-0.5 w-32 whitespace-nowrap">ファイル：</span>
              <button className="h-[42px] w-[126px] rounded-lg border-2 border-[#8f8f9d] bg-[#e9e9ed] font-['Liberation_Sans',Arial,sans-serif] text-[24px] leading-none tracking-[0.2px] text-black">
                Browse...
              </button>
              <span className="ml-[11px] -mt-0.5 whitespace-nowrap">
                <T ls="tracking-[-0.02em]">科目番号一覧.csv</T>
              </span>
            </div>
            <div className="ml-1.5 mt-[30px] flex gap-2.5 text-[#555]">
              <button className="h-[38px] w-[140px] rounded-lg border-2 border-[#ccc] bg-gradient-to-b from-[#eee] from-50% to-[#e3e3e3] to-50% pb-[3px] leading-[30px]">
                登　録
              </button>
              <button className="h-[38px] w-[236px] rounded-lg border-2 border-[#ccc] bg-gradient-to-b from-[#eee] from-50% to-[#e3e3e3] to-50% pb-[3px] leading-[30px] whitespace-nowrap">
                履修登録画面へ戻る
              </button>
            </div>
          </div>
          <div className="absolute -left-2.5 top-[167px] h-[108px] w-[213px] rounded-[14px] border-[14px] border-[#fe0000]" />
        </Card>
      </div>
    </div>
  );
}
